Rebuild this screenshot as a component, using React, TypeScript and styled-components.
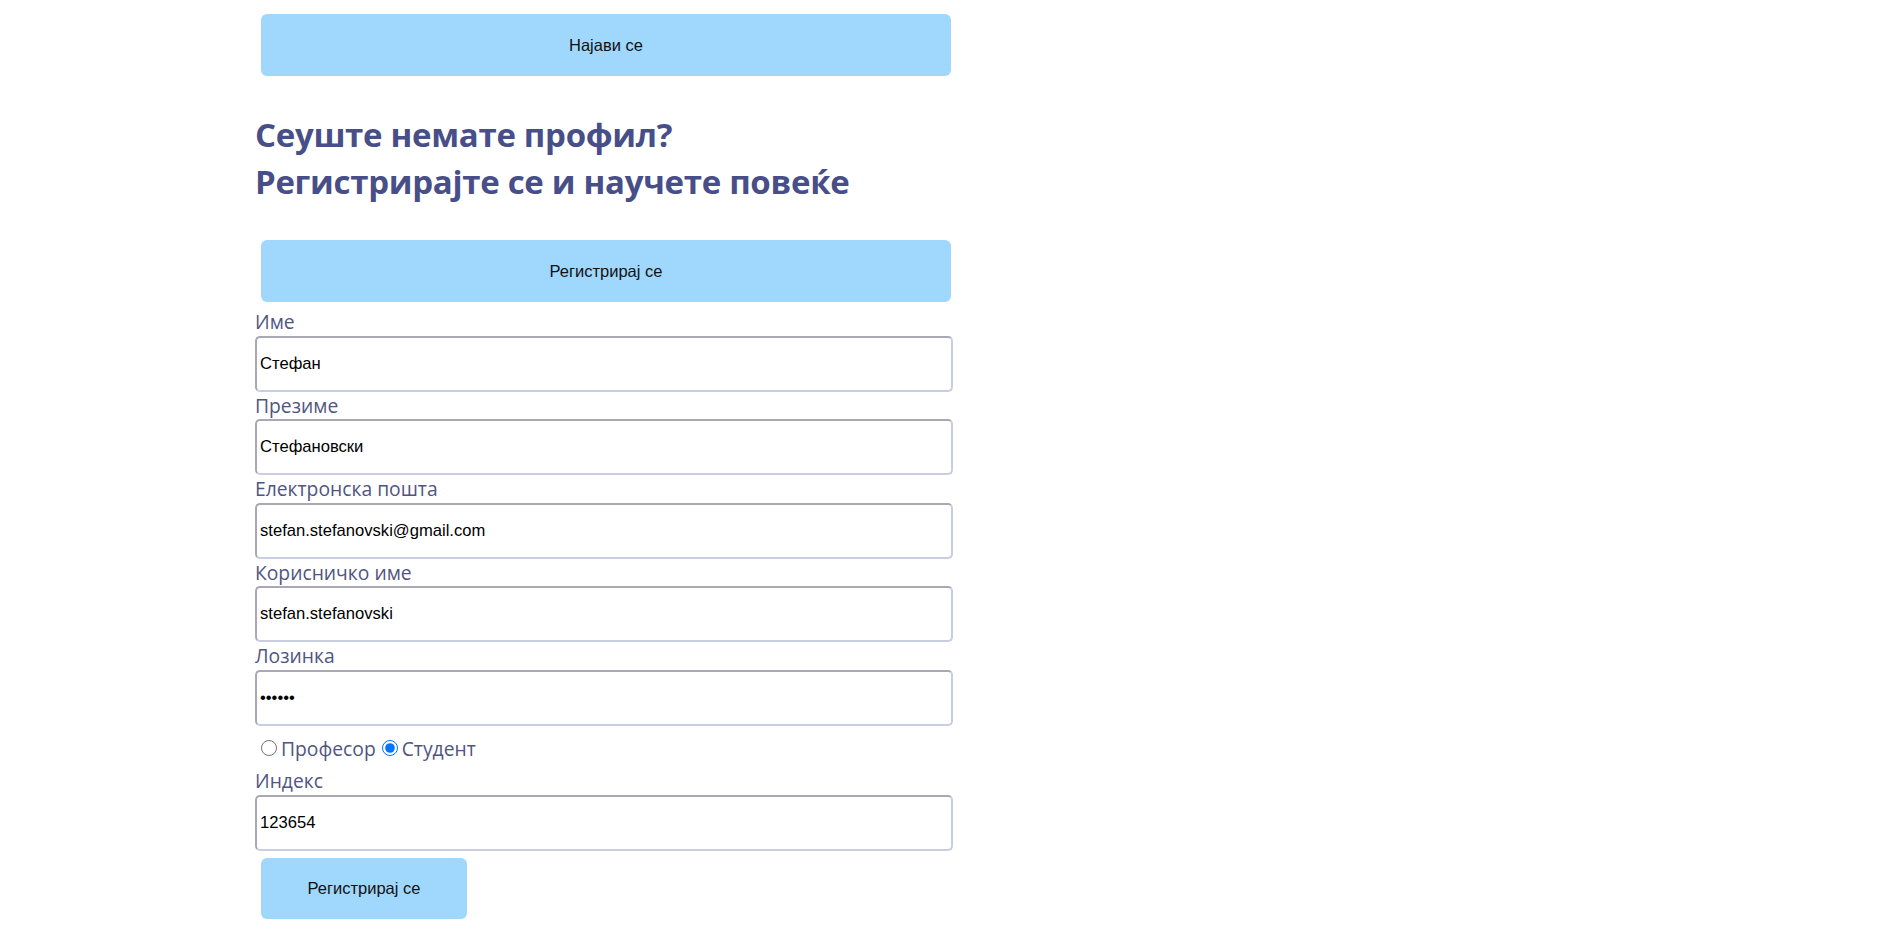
import React from 'react';
import styled, {createGlobalStyle} from 'styled-components';

const GlobalStyle = createGlobalStyle`
    html, body {
        margin:0;
        padding:0;
        background:#ffffff;
    }
`;

const fields = [
    {label:'Име', type:'text', value:'Стефан'},
    {label:'Презиме', type:'text', value:'Стефановски'},
    {label:'Електронска пошта', type:'email', value:'stefan.stefanovski@gmail.com'},
    {label:'Корисничко име', type:'text', value:'stefan.stefanovski'},
    {label:'Лозинка', type:'password', value:'123456'},
];

const App: React.FunctionComponent = () => {
    return (
        <Wrapper>
            <GlobalStyle/>
            <Button $wide>Најави се</Button>
            <Heading>
                Сеуште немате профил?<br/>
                Регистрирајте се и научете повеќе
            </Heading>
            <Button $wide>Регистрирај се</Button>
            <Form onSubmit={(e) => e.preventDefault()}>
                {fields.map((f) => (
                    <React.Fragment key={f.label}>
                        <Label>{f.label}</Label>
                        <Input type={f.type} defaultValue={f.value}/>
                    </React.Fragment>
                ))}
                <RoleRow>
                    <Radio type="radio" name="role" id="prof"/>
                    <RadioLabel htmlFor="prof">Професор</RadioLabel>
                    <Radio type="radio" name="role" id="stud" defaultChecked/>
                    <RadioLabel htmlFor="stud">Студент</RadioLabel>
                </RoleRow>
                <Label>Индекс</Label>
                <Input type="text" defaultValue="123654"/>
                <Button type="submit">Регистрирај се</Button>
            </Form>
        </Wrapper>
    );
}

const Wrapper = styled.div`
    width:698px;
    padding:14px 0 0 255px;
    display:flex;
    flex-direction:column;
`;

const Button = styled.button<{$wide?: boolean}>`
    width:${(p) => (p.$wide ? '690px' : '206px')};
    height:${(p) => (p.$wide ? '62px' : '61px')};
    margin:${(p) => (p.$wide ? '0' : '7px')} 0 0 6px;
    border:none;
    border-radius:6px;
    background-color:#a0d8fd;
    color:#111111;
    font-family:"Liberation Sans", Arial, sans-serif;
    font-size:16.5px;
    cursor:pointer;
`;

const Heading = styled.h1`
    margin:35px 0 35px 0;
    font-family:"Open Sans", "Noto Sans", sans-serif;
    font-weight:700;
    font-size:33px;
    letter-spacing:-0.3px;
    line-height:47px;
    color:#474e88;
`;

const Form = styled.form`
    display:flex;
    flex-direction:column;
    align-items:flex-start;
    margin-top:6px;
`;

const Label = styled.label`
    display:block;
    height:27.6px;
    line-height:27.6px;
    font-family:"Open Sans", "Noto Sans", sans-serif;
    font-size:19.3px;
    color:#50557f;
`;

const Input = styled.input`
    box-sizing:border-box;
    width:698px;
    height:56px;
    padding:0 3px;
    border:2px solid;
    border-color:#a9a9b6 #c9cde0 #c9cde0 #a9a9b6;
    border-radius:5px;
    font-family:"Liberation Sans", Arial, sans-serif;
    font-size:16.6px;
    color:#000000;
    background:#ffffff;
    outline:none;
`;

const RoleRow = styled.div`
    display:flex;
    align-items:center;
    height:41px;
    padding-top:4px;
    box-sizing:border-box;
`;

const Radio = styled.input`
    width:16px;
    height:16px;
    margin:0 4px 0 6px;
    accent-color:#0075ff;
`;

const RadioLabel = styled.label`
    font-family:"Open Sans", "Noto Sans", sans-serif;
    font-size:19.3px;
    color:#50557f;
`;

export default App;
